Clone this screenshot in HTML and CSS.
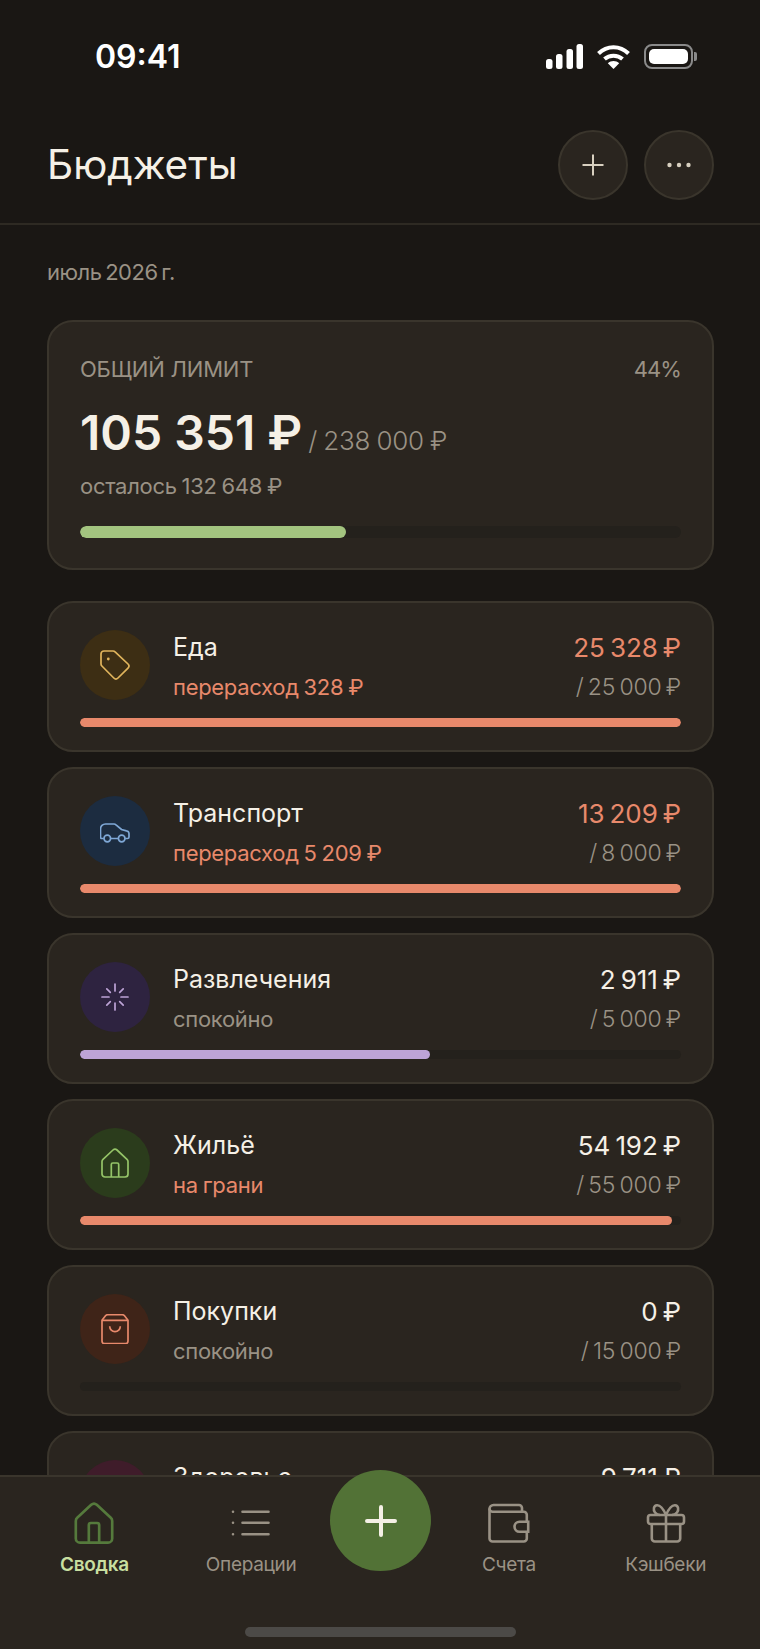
FILE: index.html
```html
<!DOCTYPE html>
<html lang="ru">
<head>
    <meta charset="UTF-8">
    <meta name="viewport" content="width=device-width, initial-scale=1.0">
    <title>Бюджеты</title>
    <link rel="stylesheet" href="styles.css">
</head>
<body>
    <div class="app">
        <div class="status-bar">
            <span class="time">09:41</span>
            <div class="status-icons">
                <svg width="37" height="25" viewBox="0 0 37 25" fill="#fff">
                    <rect x="0" y="15" width="6.5" height="10" rx="2.5"/>
                    <rect x="10" y="10" width="6.5" height="15" rx="2.5"/>
                    <rect x="20.5" y="5" width="6.5" height="20" rx="2.5"/>
                    <rect x="30.5" y="0" width="6.5" height="25" rx="2.5"/>
                </svg>
                <svg width="33" height="25" viewBox="0 0 33 25" fill="none" stroke="#fff" stroke-width="4">
                    <path d="M1.5 9.5C10 1 23 1 31.5 9.5"/>
                    <path d="M7.5 15C12.5 10.5 20.5 10.5 25.500 15"/>
                    <path d="M16.500 25L10.800 19.300C14 16.200 19 16.200 22.200 19.300Z" fill="#fff" stroke="none"/>
                </svg>
                <div class="battery">
                    <div class="battery-body"><div class="battery-fill"></div></div>
                    <div class="battery-nub"></div>
                </div>
            </div>
        </div>

        <header class="header">
            <h1>Бюджеты</h1>
            <div class="header-actions">
                <button class="round-btn">
                    <svg width="24" height="24" viewBox="0 0 24 24" fill="none" stroke="#d8d0c0" stroke-width="2"><path d="M12 1.500V22.500M1.500 12H22.500"/></svg>
                </button>
                <button class="round-btn">
                    <svg width="26" height="8" viewBox="0 0 26 8" fill="#d8d0c0"><circle cx="3.500" cy="4" r="2.200"/><circle cx="13" cy="4" r="2.200"/><circle cx="22.500" cy="4" r="2.200"/></svg>
                </button>
            </div>
        </header>

        <main class="content">
            <div class="period">июль 2026 г.</div>

            <section class="card total">
                <div class="total-top">
                    <span class="total-label">ОБЩИЙ ЛИМИТ</span>
                    <span class="total-pct">44%</span>
                </div>
                <div class="total-sum">
                    <span class="total-spent">105 351 ₽</span>
                    <span class="total-limit">/ 238 000 ₽</span>
                </div>
                <div class="total-left">осталось 132 648 ₽</div>
                <div class="track track-big"><div class="fill fill-green" style="width: 44.3%"></div></div>
            </section>

            <section class="card cat">
                <div class="cat-row">
                    <div class="cat-icon bg-yellow">
                        <svg width="30" height="30" viewBox="0 0 30 30" fill="none" stroke="#e0b45c">
                            <path d="M1 4a3 3 0 0 1 3-3h9a3 3 0 0 1 2.100.900L28 14a3 3 0 0 1 0 4.200L18 28a3 3 0 0 1-4.200 0L1.900 16A3 3 0 0 1 1 13.900Z"/>
                            <circle cx="8.300" cy="9" r="1.400" fill="#e0b45c" stroke="none"/>
                        </svg>
                    </div>
                    <div class="cat-text">
                        <div class="cat-name">Еда</div>
                        <div class="cat-note coral">перерасход 328 ₽</div>
                    </div>
                    <div class="cat-nums">
                        <div class="cat-spent coral">25 328 ₽</div>
                        <div class="cat-limit">/ 25 000 ₽</div>
                    </div>
                </div>
                <div class="track"><div class="fill fill-coral" style="width: 100%"></div></div>
            </section>

            <section class="card cat">
                <div class="cat-row">
                    <div class="cat-icon bg-blue">
                        <svg width="30" height="30" viewBox="0 0 30 30" fill="none" stroke="#7fa8d6">
                            <path d="M3.800 22.500H2A1.500 1.500 0 0 1 .5 21V13a5 5 0 0 1 5-5H14a3 3 0 0 1 2 .8l5.500 4.700 5 1.300a3 3 0 0 1 2.500 2.700V21a1.500 1.500 0 0 1-1.500 1.500h-2.300M10.800 22.500h7.400"/>
                            <circle cx="7.300" cy="22.500" r="3.300"/>
                            <circle cx="21.700" cy="22.500" r="3.300"/>
                        </svg>
                    </div>
                    <div class="cat-text">
                        <div class="cat-name">Транспорт</div>
                        <div class="cat-note coral">перерасход 5 209 ₽</div>
                    </div>
                    <div class="cat-nums">
                        <div class="cat-spent coral">13 209 ₽</div>
                        <div class="cat-limit">/ 8 000 ₽</div>
                    </div>
                </div>
                <div class="track"><div class="fill fill-coral" style="width: 100%"></div></div>
            </section>

            <section class="card cat">
                <div class="cat-row">
                    <div class="cat-icon bg-purple">
                        <svg width="30" height="30" viewBox="0 0 30 30" fill="none" stroke="#bda3d6" stroke-linecap="round">
                            <path d="M15 2V9M15 21V28M2 15H9M21 15H28M6.800 6.800L10.300 10.300M19.700 19.700L23.200 23.200M6.800 23.200L10.300 19.700M19.700 10.300L23.200 6.800"/>
                        </svg>
                    </div>
                    <div class="cat-text">
                        <div class="cat-name">Развлечения</div>
                        <div class="cat-note">спокойно</div>
                    </div>
                    <div class="cat-nums">
                        <div class="cat-spent">2 911 ₽</div>
                        <div class="cat-limit">/ 5 000 ₽</div>
                    </div>
                </div>
                <div class="track"><div class="fill fill-purple" style="width: 58.2%"></div></div>
            </section>

            <section class="card cat">
                <div class="cat-row">
                    <div class="cat-icon bg-green">
                        <svg width="30" height="30" viewBox="0 0 30 30" fill="none" stroke="#95c468">
                            <path d="M2 13.500a3 3 0 0 1 1-2.200L13 2a3 3 0 0 1 4 0l10 9.300a3 3 0 0 1 1 2.200V26a3 3 0 0 1-3 3H5a3 3 0 0 1-3-3Z"/>
                            <path d="M11.300 29V16.500a1.500 1.500 0 0 1 1.500-1.500h4.400a1.500 1.500 0 0 1 1.500 1.500V29"/>
                        </svg>
                    </div>
                    <div class="cat-text">
                        <div class="cat-name">Жильё</div>
                        <div class="cat-note coral">на грани</div>
                    </div>
                    <div class="cat-nums">
                        <div class="cat-spent">54 192 ₽</div>
                        <div class="cat-limit">/ 55 000 ₽</div>
                    </div>
                </div>
                <div class="track"><div class="fill fill-coral" style="width: 98.5%"></div></div>
            </section>

            <section class="card cat">
                <div class="cat-row">
                    <div class="cat-icon bg-red">
                        <svg width="30" height="30" viewBox="0 0 30 30" fill="none" stroke="#e8896b">
                            <path d="M2 6.300L5.500 1.800A3 3 0 0 1 7.800 .7H22.200a3 3 0 0 1 2.300 1.100L28 6.300V27a2.700 2.700 0 0 1-2.700 2.700H4.700A2.700 2.700 0 0 1 2 27Z"/>
                            <path d="M2 6.300H28M9.700 12.300a5.300 5.300 0 0 0 10.600 0"/>
                        </svg>
                    </div>
                    <div class="cat-text">
                        <div class="cat-name">Покупки</div>
                        <div class="cat-note">спокойно</div>
                    </div>
                    <div class="cat-nums">
                        <div class="cat-spent">0 ₽</div>
                        <div class="cat-limit">/ 15 000 ₽</div>
                    </div>
                </div>
                <div class="track"></div>
            </section>

            <section class="card cat">
                <div class="cat-row">
                    <div class="cat-icon bg-pink"></div>
                    <div class="cat-text">
                        <div class="cat-name">Здоровье</div>
                        <div class="cat-note">спокойно</div>
                    </div>
                    <div class="cat-nums">
                        <div class="cat-spent">9 711 ₽</div>
                        <div class="cat-limit">/ 20 000 ₽</div>
                    </div>
                </div>
            </section>
        </main>

        <nav class="tabbar">
            <div class="tabs">
                <div class="tab active">
                    <svg width="42" height="42" viewBox="0 0 30 30" fill="none" stroke="#557a3c" stroke-width="1.900">
                        <path d="M2 13.500a3 3 0 0 1 1-2.200L13 2a3 3 0 0 1 4 0l10 9.300a3 3 0 0 1 1 2.200V26a3 3 0 0 1-3 3H5a3 3 0 0 1-3-3Z"/>
                        <path d="M11.300 29V16.500a1.500 1.500 0 0 1 1.500-1.500h4.400a1.500 1.500 0 0 1 1.500 1.500V29"/>
                    </svg>
                    <span>Сводка</span>
                </div>
                <div class="tab">
                    <svg width="42" height="42" viewBox="0 0 42 42" fill="none" stroke="#9a9285" stroke-width="2.600" stroke-linecap="round">
                        <path d="M12.500 9.700H38.500M12.500 20.700H38.500M12.500 32.300H38.500"/>
                        <path d="M3 9.700V9.710M3 20.700V20.710M3 32.300V32.310"/>
                    </svg>
                    <span>Операции</span>
                </div>
                <div class="tab-gap"></div>
                <div class="tab">
                    <svg width="42" height="42" viewBox="0 0 42 42" fill="none" stroke="#9a9285" stroke-width="2.600">
                        <path d="M38.800 19.700V12.700a3 3 0 0 0-3-3H34V6a3 3 0 0 0-3-3H5.500a4 4 0 0 0-4 4V36.500a3 3 0 0 0 3 3H35.800a3 3 0 0 0 3-3V29.700"/>
                        <path d="M1.500 6.500a3.200 3.200 0 0 0 3.200 3.200H34"/>
                        <path d="M31.500 19.700H40.200V29.700H31.500a5 5 0 0 1 0-10Z"/>
                    </svg>
                    <span>Счета</span>
                </div>
                <div class="tab">
                    <svg width="42" height="42" viewBox="0 0 42 42" fill="none" stroke="#9a9285" stroke-width="2.600">
                        <rect x="3" y="13" width="36" height="9" rx="2.500"/>
                        <path d="M6.800 22V36.500a3 3 0 0 0 3 3H32.200a3 3 0 0 0 3-3V22M21 13V39.500"/>
                        <path d="M21 13C18 6 15 3 12 3.200C8.500 3.500 8 8 10 10.500C11.200 12 13 13 15 13M21 13C24 6 27 3 30 3.200C33.500 3.500 34 8 32 10.500C30.800 12 29 13 27 13"/>
                    </svg>
                    <span>Кэшбеки</span>
                </div>
            </div>
            <button class="fab">
                <svg width="32" height="32" viewBox="0 0 32 32" fill="none" stroke="#f5f0e6" stroke-width="4" stroke-linecap="round"><path d="M16 2V30M2 16H30"/></svg>
            </button>
            <div class="home-bar"></div>
        </nav>
    </div>
</body>
</html>
```

FILE: styles.css
```css
* {
    box-sizing: border-box;
}

body {
    margin: 0;
    background-color: #1a1714;
    font-family: Inter, "Noto Sans", sans-serif;
    color: #f5f0e6;
}

.app {
    width: 760px;
    height: 1649px;
    display: flex;
    flex-direction: column;
    overflow: hidden;
}

/* status bar */
.status-bar {
    height: 114px;
    flex-shrink: 0;
    display: flex;
    justify-content: space-between;
    align-items: flex-start;
    padding: 44px 63px 0 95px;
}

.time {
    font-size: 32px;
    font-weight: 600;
    line-height: 26px;
    color: #fff;
}

.status-icons {
    display: flex;
    align-items: center;
    gap: 14px;
}

.battery {
    display: flex;
    align-items: center;
    gap: 1px;
}

.battery-body {
    width: 49px;
    height: 25px;
    padding: 3px;
    border: 2px solid #8a8a8a;
    border-radius: 8px;
}

.battery-fill {
    height: 100%;
    background-color: #fff;
    border-radius: 5px;
}

.battery-nub {
    width: 3px;
    height: 9px;
    background-color: #8a8a8a;
    border-radius: 0 2px 2px 0;
}

/* header */
.header {
    height: 111px;
    flex-shrink: 0;
    display: flex;
    justify-content: space-between;
    align-items: flex-start;
    padding: 16px 46px 0 47px;
    border-bottom: 2px solid #2e2a23;
}

h1 {
    margin: 0;
    font-size: 40.5px;
    font-weight: 400;
    line-height: 70px;
}

.header-actions {
    display: flex;
    gap: 16px;
}

.round-btn {
    width: 70px;
    height: 70px;
    padding: 0;
    display: flex;
    align-items: center;
    justify-content: center;
    background-color: #2a251f;
    border: 2px solid #3a352c;
    border-radius: 50%;
}

/* content */
.content {
    flex: 1;
    min-height: 0;
    overflow: hidden;
    padding: 0 46px 0 47px;
}

.period {
    height: 95px;
    padding-top: 32px;
    font-size: 22px;
    line-height: 30px;
    letter-spacing: -0.5px;
    word-spacing: -2px;
    color: #9a9285;
}

.card {
    background-color: #2a251f;
    border: 2px solid #3a352c;
    border-radius: 26px;
    padding: 0 31px;
}

.total {
    height: 250px;
    margin-bottom: 31px;
    padding-top: 32px;
}

.total-top {
    display: flex;
    justify-content: space-between;
    font-size: 22px;
    line-height: 30px;
    letter-spacing: -0.2px;
    color: #9a9285;
}

.total-pct {
    letter-spacing: -0.9px;
}

.total-sum {
    display: flex;
    align-items: baseline;
    gap: 6px;
    margin-top: 20px;
    line-height: 58px;
}

.total-spent {
    font-size: 48px;
    font-weight: 600;
}

.total-limit {
    font-size: 26px;
    font-weight: 300;
    letter-spacing: -0.2px;
    word-spacing: -1px;
    color: #9a9285;
}

.total-left {
    margin-top: 1px;
    font-size: 22px;
    line-height: 30px;
    letter-spacing: -0.3px;
    word-spacing: -1px;
    color: #9a9285;
}

.track {
    height: 9px;
    margin-top: 16px;
    background-color: #24211c;
    border-radius: 6px;
    overflow: hidden;
}

.track-big {
    height: 12px;
    margin-top: 25px;
}

.fill {
    height: 100%;
    border-radius: 6px;
}

.fill-green { background-color: #a3c47f; }
.fill-coral { background-color: #e8896b; }
.fill-purple { background-color: #bda3d6; }

.cat {
    height: 151px;
    margin-bottom: 15px;
    padding-top: 27px;
}

.cat-row {
    display: flex;
    align-items: flex-start;
}

.cat-icon {
    width: 70px;
    height: 70px;
    flex-shrink: 0;
    display: flex;
    align-items: center;
    justify-content: center;
    border-radius: 50%;
}

.cat-icon svg {
    stroke-width: 1.700;
}

.bg-yellow { background-color: #3d2e14; }
.bg-blue { background-color: #1c2c40; }
.bg-purple { background-color: #2e2340; }
.bg-green { background-color: #2b3c1c; }
.bg-red { background-color: #3f2418; }
.bg-pink { background-color: #3f1c2a; }

.cat-text {
    flex: 1;
    margin-left: 23px;
}

.cat-name {
    font-size: 25px;
    line-height: 34px;
}

.cat-note {
    margin-top: 8px;
    font-size: 22px;
    line-height: 30px;
    letter-spacing: -0.3px;
    word-spacing: -1px;
    color: #9a9285;
}

.cat-nums {
    text-align: right;
}

.cat-spent {
    font-size: 26px;
    line-height: 34px;
    margin-top: 1px;
    letter-spacing: -0.1px;
    word-spacing: -2px;
}

.cat-limit {
    margin-top: 7px;
    font-size: 23px;
    font-weight: 300;
    line-height: 30px;
    letter-spacing: -0.2px;
    word-spacing: -2px;
    color: #9a9285;
}

.coral {
    color: #e8896b;
}

/* bottom bar */
.tabbar {
    position: relative;
    height: 174px;
    flex-shrink: 0;
    background-color: #2a251f;
    border-top: 2px solid #3a352c;
}

.tabs {
    display: flex;
    padding: 25px 16px 0;
}

.tab {
    flex: 1;
    display: flex;
    flex-direction: column;
    align-items: center;
    gap: 7px;
    font-size: 19px;
    line-height: 28px;
    letter-spacing: -0.3px;
    color: #9a9285;
}

.tab.active {
    font-weight: 600;
    color: #c8dfa0;
}

.tab-gap {
    width: 101px;
    flex-shrink: 0;
}

.fab {
    position: absolute;
    top: -7px;
    left: 330px;
    width: 101px;
    height: 101px;
    padding: 0;
    display: flex;
    align-items: center;
    justify-content: center;
    background-color: #527236;
    border: none;
    border-radius: 50%;
}

.home-bar {
    width: 271px;
    height: 10px;
    margin: 48px auto 0;
    background-color: #4c4a47;
    border-radius: 5px;
}
```
